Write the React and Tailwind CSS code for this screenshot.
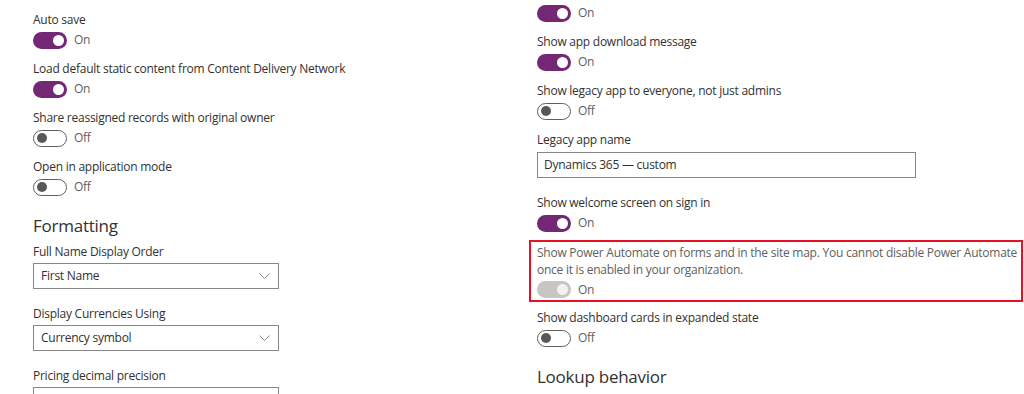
const font = { fontFamily: '"Open Sans", "Noto Sans", sans-serif', letterSpacing: '-0.25px' }

function Toggle({ on, disabled }) {
  if (disabled) {
    return (
      <div className="flex h-[17px] w-[34px] items-center justify-end rounded-full bg-[#c8c6c4] px-[3px]">
        <span className="h-[11px] w-[11px] rounded-full bg-[#f3f2f1]" />
      </div>
    )
  }
  if (on) {
    return (
      <div className="flex h-[17px] w-[34px] items-center justify-end rounded-full bg-[#742774] px-[3px]">
        <span className="h-[11px] w-[11px] rounded-full bg-white" />
      </div>
    )
  }
  return (
    <div className="flex h-[17px] w-[34px] items-center rounded-full border border-[#605e5c] bg-white px-[3px]">
      <span className="h-[10px] w-[10px] rounded-full bg-[#5a5856]" />
    </div>
  )
}

function ToggleItem({ label, on, className = 'mb-[9px]' }) {
  return (
    <div className={className}>
      <div className="h-[20px] text-[12px] leading-[20px] text-[#323130] whitespace-nowrap">{label}</div>
      <div className="flex h-[20px] items-center gap-[7px]">
        <Toggle on={on} />
        <span className="text-[12px] text-[#605e5c]">{on ? 'On' : 'Off'}</span>
      </div>
    </div>
  )
}

function Heading({ children }) {
  return <div className="pt-[6px] pb-[2px] text-[17px] leading-[28px] text-[#323130]">{children}</div>
}

function Select({ value, className = 'mb-[15px]' }) {
  return (
    <div className={className}>
      <div className="mt-[1px] flex h-[26px] w-[246px] items-center justify-between border border-[#8a8886] bg-white pl-[7px] pr-[8px]">
        <span className="text-[12px] text-[#323130]">{value}</span>
        <svg width="11" height="6" viewBox="0 0 11 6" fill="none">
          <path d="M0.5 0.5 L5.5 5.5 L10.5 0.5" stroke="#8a8886" strokeWidth="1" />
        </svg>
      </div>
    </div>
  )
}

function FieldLabel({ children }) {
  return <div className="h-[20px] text-[12px] leading-[20px] text-[#323130]">{children}</div>
}

export default function App() {
  return (
    <div className="h-[394px] w-[1024px] overflow-hidden bg-white" style={font}>
      <div className="-mt-[26px] flex pl-[33px]">
        <div className="w-[504px] shrink-0">
          <Heading>Basic behavior</Heading>
          <ToggleItem label="Auto save" on />
          <ToggleItem label="Load default static content from Content Delivery Network" on />
          <ToggleItem label="Share reassigned records with original owner" />
          <ToggleItem label="Open in application mode" />
          <Heading>Formatting</Heading>
          <FieldLabel>Full Name Display Order</FieldLabel>
          <Select value="First Name" />
          <FieldLabel>Display Currencies Using</FieldLabel>
          <Select value="Currency symbol" />
          <FieldLabel>Pricing decimal precision</FieldLabel>
          <Select value="2" />
        </div>
        <div className="flex-1 pt-[9px] pr-[1px]">
          <ToggleItem label="Show Skype presence" on />
          <ToggleItem label="Show app download message" on />
          <ToggleItem label="Show legacy app to everyone, not just admins" />
          <FieldLabel>Legacy app name</FieldLabel>
          <div className="mt-[2px] mb-[15px] flex h-[26px] w-[379px] items-center border border-[#8a8886] bg-white pl-[6px]">
            <span className="text-[12px] text-[#323130]">Dynamics 365 — custom</span>
          </div>
          <ToggleItem label="Show welcome screen on sign in" on className="mb-[7px]" />
          <div className="-ml-[8px] mb-[6px] border-2 border-[#e81123] pl-[6px] pr-[1px] pt-[2px]">
            <div className="text-[12px] leading-[17px] text-[#605e5c]">
              Show Power Automate on forms and in the site map. You cannot disable Power Automate once it is enabled in your organization.
            </div>
            <div className="mt-[2px] flex h-[20px] items-center gap-[7px] pb-[1px]">
              <Toggle on disabled />
              <span className="text-[12px] text-[#605e5c]">On</span>
            </div>
          </div>
          <ToggleItem label="Show dashboard cards in expanded state" />
          <Heading>Lookup behavior</Heading>
        </div>
      </div>
    </div>
  )
}
